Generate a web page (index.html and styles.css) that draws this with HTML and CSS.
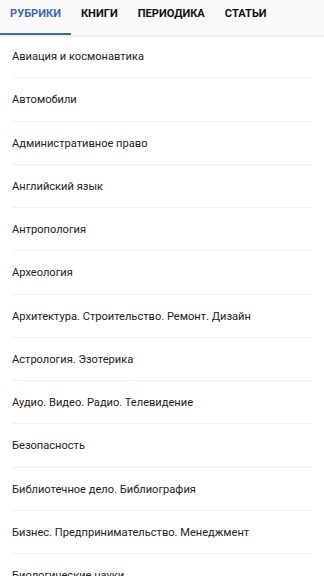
FILE: index.html
```html
<!DOCTYPE html>
<html lang="ru">
<head>
<meta charset="utf-8">
<link rel="stylesheet" href="styles.css">
</head>
<body>
<nav class="tabs">
  <div class="tab active">РУБРИКИ</div>
  <div class="tab">КНИГИ</div>
  <div class="tab">ПЕРИОДИКА</div>
  <div class="tab">СТАТЬИ</div>
</nav>
<ul class="list">
  <li class="item">Авиация и космонавтика</li>
  <li class="item">Автомобили</li>
  <li class="item">Административное право</li>
  <li class="item">Английский язык</li>
  <li class="item">Антропология</li>
  <li class="item">Археология</li>
  <li class="item">Архитектура. Строительство. Ремонт. Дизайн</li>
  <li class="item">Астрология. Эзотерика</li>
  <li class="item">Аудио. Видео. Радио. Телевидение</li>
  <li class="item">Безопасность</li>
  <li class="item">Библиотечное дело. Библиография</li>
  <li class="item">Бизнес. Предпринимательство. Менеджмент</li>
  <li class="item">Биологические науки</li>
</ul>
</body>
</html>
```
FILE: styles.css
```css
html, body {
  margin: 0;
  padding: 0;
  background: #ffffff;
  font-family: Roboto, "Noto Sans", sans-serif;
  overflow: hidden;
}
.tabs {
  display: flex;
  height: 35px;
  background: #fafafa;
  box-shadow: 0 1px 3px rgba(0,0,0,0.12);
  position: relative;
  z-index: 1;
}
.tab {
  box-sizing: border-box;
  padding: 0 10px;
  height: 35px;
  line-height: 27px;
  font-size: 11.1px;
  font-weight: 700;
  color: #111;
  border-bottom: 2px solid transparent;
}
.tab.active {
  color: #3f68b0;
  border-bottom-color: #3f68b0;
}
.list {
  list-style: none;
  margin: 0;
  padding: 0 12px;
}
.item {
  height: 42.25px;
  line-height: 44px;
  font-size: 11.1px;
  color: #222;
  border-bottom: 1px solid #f0f0f0;
  white-space: nowrap;
}
```
